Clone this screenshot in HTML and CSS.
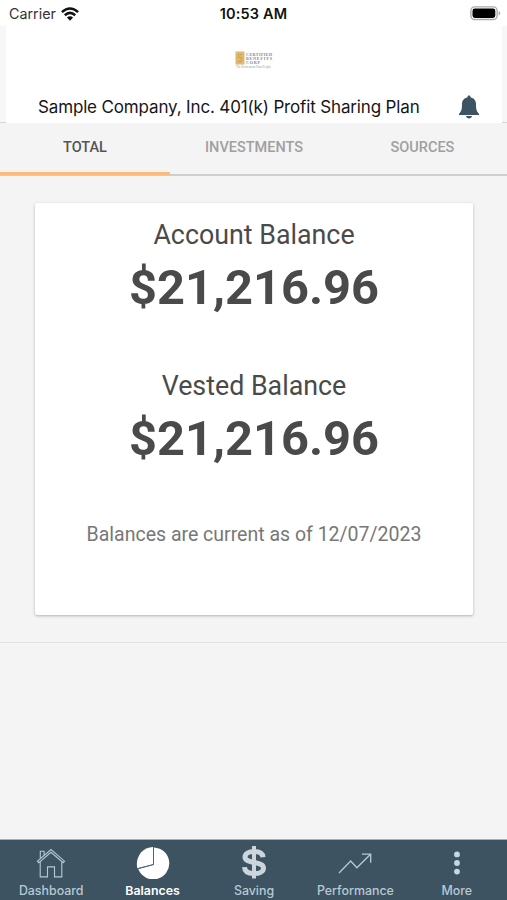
FILE: index.html
```
<!DOCTYPE html>
<html lang="en">
<head>
<meta charset="utf-8">
<title>Balances</title>
<link rel="stylesheet" href="styles.css">
</head>
<body>
<div class="app">
  <div class="status">
    <div class="carrier"><span class="carrier-name">Carrier</span>
      <svg class="wifi" width="18" height="14" viewBox="0 0 18 14" fill="none" stroke="#111" stroke-width="2.5"><path d="M.9 5.1Q9-2.1 17.1 5.1"/><path d="M3.8 8.2Q9 3.6 14.2 8.2"/><path d="M9 13.7 5.9 10.6Q9 8 12.1 10.6Z" fill="#111" stroke="none"/></svg>
    </div>
    <div class="time"><span>10:53 AM</span></div>
    <div class="battery">
      <svg width="31" height="15" viewBox="0 0 31 15"><rect x=".9" y=".9" width="26.2" height="12.6" rx="3.8" fill="#fff" stroke="#aaa" stroke-width="1.4"/><rect x="2.5" y="2.5" width="22.8" height="9.4" rx="2.3" fill="#000"/><path d="M28.6 5q1.6.5 1.6 2.2T28.6 9.4Z" fill="#aaa"/></svg>
    </div>
  </div>
  <header class="header">
    <div class="panel">
      <svg class="logo" width="38" height="18" viewBox="0 0 38 18">
        <rect x=".5" y=".5" width="9" height="13" fill="#dfb96f"/>
        <path d="M7 3.5H3.5v3h3v4H3" fill="none" stroke="#c69c50" stroke-width=".8"/>
        <g class="logo-name"><text x="11" y="4.6" textLength="26">CERTIFIED</text><text x="11" y="9" textLength="26">BENEFITS</text><text x="11" y="13.4" textLength="14">CORP</text></g>
        <text class="logo-line" x="1" y="17.2" textLength="35">The Retirement Plan People</text>
      </svg>
      <div class="plan">
        <h1>Sample Company, Inc. 401(k) Profit Sharing Plan</h1>
        <svg class="bell" width="22" height="24" viewBox="0 0 22 24" fill="#3d5361"><path d="M11 .5c1 0 1.5.7 1.500 1.700 3.400.8 5.500 3.400 5.500 6.800 0 5.700.7 7.500 3 9.800V20H1v-1.200C3.300 16.500 4 14.700 4 9c0-3.400 2.100-6 5.500-6.800C9.500 1.200 10 .5 11 .5Z"/><path d="M8 21h6c-.3 1.600-1.400 2.400-3 2.400S8.300 22.600 8 21Z"/></svg>
      </div>
    </div>
  </header>
  <nav class="tabs">
    <div class="tab active"><span>TOTAL</span></div>
    <div class="tab"><span>INVESTMENTS</span></div>
    <div class="tab"><span>SOURCES</span></div>
  </nav>
  <main class="content">
    <section class="card">
      <h2 class="label">Account Balance</h2>
      <p class="amount">$21,216.96</p>
      <h2 class="label">Vested Balance</h2>
      <p class="amount">$21,216.96</p>
      <p class="note">Balances are current as of 12/07/2023</p>
    </section>
  </main>
  <footer class="nav">
    <div class="item">
      <svg width="34" height="36" viewBox="0 0 34 36" fill="none" stroke="#b6c9d5" stroke-width="1.100"><path d="M3.500 18.200 17 6.500l13.500 11.700-1.300 1.500L17 9.300 4.800 19.700Z"/><path d="M6.200 18.700v15.200h7.300v-10h7v10h7.300V18.700"/><path d="M6.300 15.500V8.200h3.800v4"/></svg>
      <span>Dashboard</span>
    </div>
    <div class="item current">
      <svg width="34" height="36" viewBox="0 0 34 36"><path d="M18 4.400A16 16 0 1 1 2.300 26L18 21.700Z" fill="#fff"/><path d="M17.200 3.900V21.200L1.300 25.200C-1 15 5.500 4 17.200 3.900Z" fill="#fff"/><path d="M17.500 4v17.500L2 25.600" fill="none" stroke="#53636d" stroke-width="1"/></svg>
      <span>Balances</span>
    </div>
    <div class="item">
      <svg width="34" height="36" viewBox="0 0 34 36" fill="none" stroke="#ccd4dc" stroke-width="5"><path d="M26 14.300C25.700 10.500 22.500 8.600 17 8.600S8 10.800 8 14.100c0 7.300 18.500 3.500 18.500 10.800 0 3.600-3.800 5.700-9.500 5.700-5.800 0-9.300-2.200-9.500-6.500"/><path d="M17 3v32.500" stroke-width="4"/></svg>
      <span>Saving</span>
    </div>
    <div class="item">
      <svg width="34" height="36" viewBox="0 0 34 36" fill="none" stroke="#b6c9d5" stroke-width="1.300"><path d="M1 30 12.700 18l6.200 6.800L32.500 11.200M24 11.100h8.700v8.600"/></svg>
      <span>Performance</span>
    </div>
    <div class="item">
      <svg width="34" height="36" viewBox="0 0 34 36" fill="#c5d7e3"><circle cx="17" cy="11.400" r="2.900"/><circle cx="17" cy="20" r="2.900"/><circle cx="17" cy="28.600" r="2.900"/></svg>
      <span>More</span>
    </div>
  </footer>
</div>
</body>
</html>
```
FILE: styles.css
```
* { box-sizing: border-box; margin: 0; padding: 0; }
body { background: #f4f4f4; font-family: Roboto, sans-serif; }
svg { display: block; flex: none; }
.app { width: 507px; height: 900px; display: flex; flex-direction: column; overflow: hidden; }
.status { height: 26px; flex: none; background: #fff; display: grid; grid-template-columns: 1fr 1fr 1fr; font-family: Inter, sans-serif; line-height: 26px; color: #111; }
.carrier { display: flex; align-items: center; padding: 1px 0 0 9px; gap: 5px; font-size: 14.300px; color: #333; }
.time { text-align: center; font-size: 14.500px; font-weight: 600; padding-top: 1px; letter-spacing: .15px; }
.battery { display: flex; justify-content: flex-end; padding: 6px 6px 0 0; }
.header { height: 97px; flex: none; padding: 0 5px 0 6px; background: #f7f7f7; border-bottom: 1px solid #d6d6d6; }
.panel { height: 97px; background: #fff; padding-top: 25px; }
.logo { margin-left: 229px; }
.logo-name { font: 600 4.200px "Liberation Serif", serif; fill: #7d868c; }
.logo-line { font: 3px "Liberation Serif", serif; fill: #8b9a98; }
.plan { display: flex; justify-content: space-between; padding: 26px 22px 0 32px; }
.plan h1 { font: 400 17px/24px Inter, sans-serif; letter-spacing: -.15px; color: #161616; white-space: nowrap; }
.tabs { height: 53px; flex: none; display: grid; grid-template-columns: 170px 1fr 169px; border-bottom: 2px solid #cecece; }
.tab { text-align: center; font-size: 14.500px; font-weight: 500; line-height: 50px; color: #a0a0a0; height: 53px; }
.tab.active { color: #555; border-bottom: 3px solid #fbbb7d; height: 52px; }
.content { height: 467px; flex: none; padding: 27px 35px 0; border-bottom: 1px solid #e2e2e2; }
.card { width: 438px; height: 412px; background: #fff; border-radius: 2px; box-shadow: 0 1px 3px rgba(0,0,0,.28); text-align: center; color: #4a4a4a; padding-top: 15px; }
.label { font-size: 26.800px; line-height: 34px; font-weight: 400; }
.amount { font-size: 48.800px; line-height: 58px; font-weight: 700; padding-top: 7px; height: 117px; }
.note { font-size: 19.500px; line-height: 26px; color: #777; padding-top: 2px; }
.nav { height: 61px; flex: none; margin-top: auto; background: #3d5361; border-top: 1px solid #a9b0b4; display: grid; grid-template-columns: repeat(5, 1fr); }
.item { display: flex; flex-direction: column; align-items: center; padding: 3px 0 0 1px; font: 500 12.400px/16px Inter, sans-serif; color: #b6c9d5; }
.item span { margin-top: 4px; }
.item.current { color: #fff; font-weight: 600; }
```
